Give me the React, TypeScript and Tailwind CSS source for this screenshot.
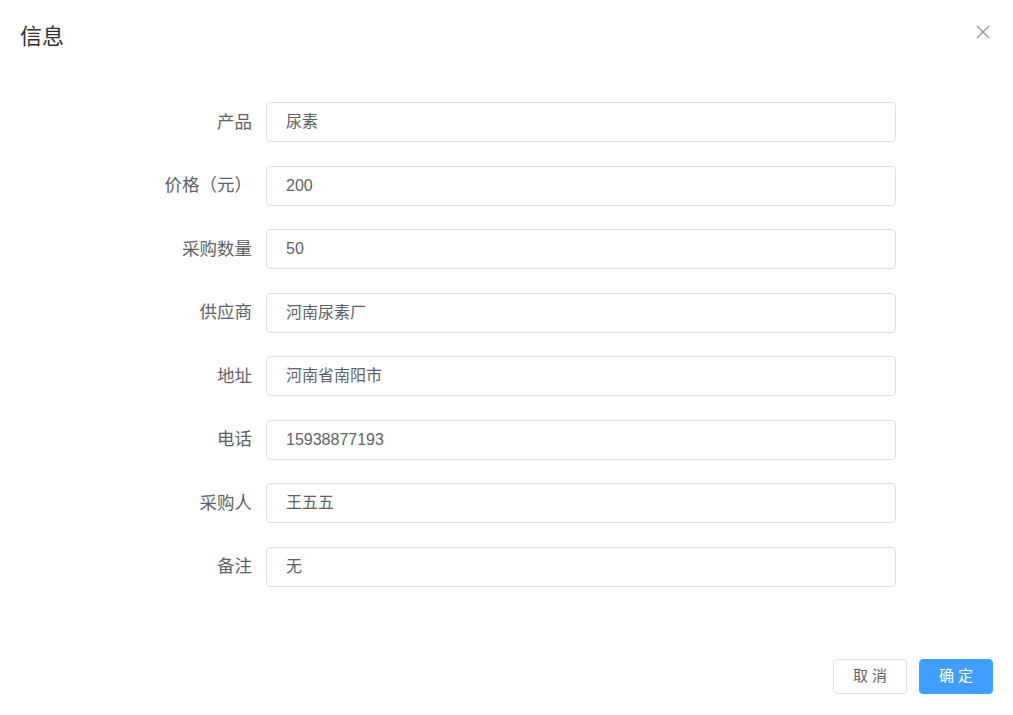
import React from 'react';

const fields: { label: string; value: string }[] = [
  { label: '产品', value: '尿素' },
  { label: '价格（元）', value: '200' },
  { label: '采购数量', value: '50' },
  { label: '供应商', value: '河南尿素厂' },
  { label: '地址', value: '河南省南阳市' },
  { label: '电话', value: '15938877193' },
  { label: '采购人', value: '王五五' },
  { label: '备注', value: '无' },
];

const font = { fontFamily: '"Liberation Sans", "Noto Sans CJK SC", sans-serif' };

const App: React.FC = () => {
  return (
    <div className="w-[1013px] h-[715px] bg-white flex flex-col" style={font}>
      <div className="flex items-start justify-between pt-[22px] pl-[20px] pr-[23px]">
        <span className="text-[22px] leading-[30px] text-[#303133]">信息</span>
        <button type="button" className="mt-[3px] text-[#909399]" aria-label="关闭">
          <svg className="w-[14px] h-[14px]" viewBox="0 0 14 14" fill="none" stroke="currentColor" strokeWidth={1.3}>
            <path d="M1 1l12 12M13 1L1 13" />
          </svg>
        </button>
      </div>

      <div className="flex flex-col gap-[23.5px] pt-[50px] pl-[132px]">
        {fields.map((f) => (
          <div key={f.label} className="flex items-center">
            <label className="w-[120px] text-right text-[17.5px] text-[#606266] shrink-0">
              {f.label}
            </label>
            <div className="ml-[14px] w-[630px] h-[40px] border border-[#dcdfe6] rounded-[4px] flex items-center pl-[19px] text-[16px] text-[#606266]">
              {f.value}
            </div>
          </div>
        ))}
      </div>

      <div className="mt-auto flex justify-end gap-[12px] pr-[20px] pb-[21px]">
        <button
          type="button"
          className="w-[74px] h-[35px] border border-[#dcdfe6] rounded-[4px] bg-white text-[15px] text-[#606266] tracking-[4px] pl-[4px]"
        >
          取消
        </button>
        <button
          type="button"
          className="w-[74px] h-[35px] border border-[#409eff] rounded-[4px] bg-[#409eff] text-[15px] text-white tracking-[4px] pl-[4px]"
        >
          确定
        </button>
      </div>
    </div>
  );
};

export default App;
